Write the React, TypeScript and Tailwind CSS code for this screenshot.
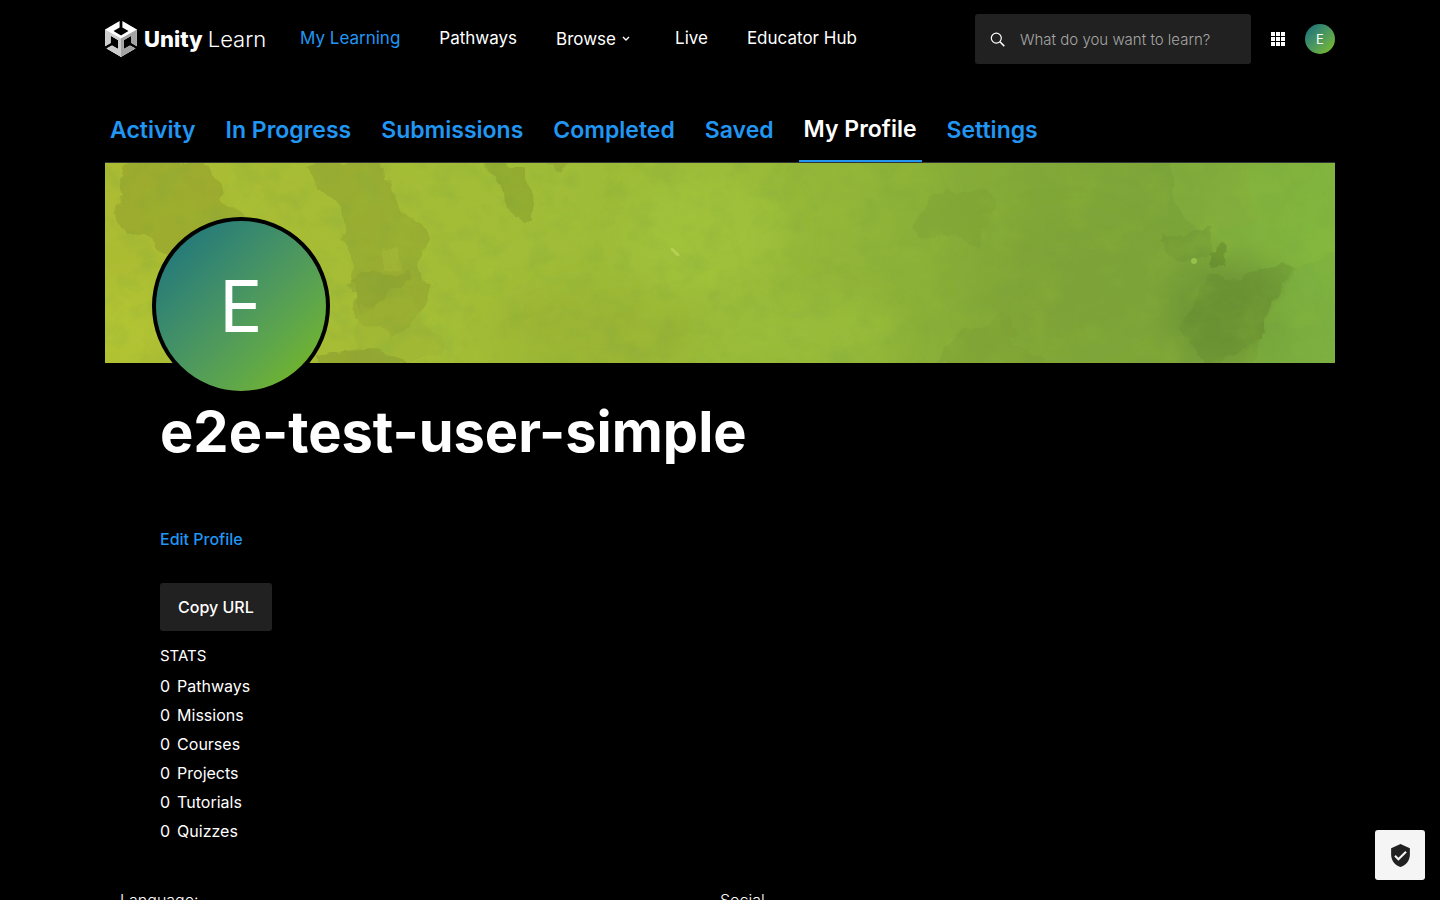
import React from "react";
import { MdVerifiedUser } from "react-icons/md";

const CUBE =
  "m12.9288 4.2939 3.7997 2.1929c.1366.077.1415.2905 0 .3675l-4.515 2.6076a.4192.4192 0 0 1-.4246 0L7.274 6.8543c-.139-.0745-.1415-.293 0-.3675l3.7972-2.193V0L1.3758 5.5977V16.793l3.7177-2.1456v-4.3858c-.0025-.1565.1813-.2682.318-.1838l4.5148 2.6076a.4252.4252 0 0 1 .2136.3676v5.2127c.0025.1565-.1813.2682-.3179.1838l-3.7996-2.1929-3.7178 2.1457L12 24l9.6954-5.5977-3.7178-2.1457-3.7996 2.1929c-.1341.082-.3229-.0248-.3179-.1838V13.053c0-.1565.087-.2956.2136-.3676l4.5149-2.6076c.134-.082.3228.0224.3179.1838v4.3858l3.7177 2.1456V5.5977L12.9288 0z";

function Logo() {
  return (
    <a href="#home" className="flex w-[161px] shrink-0 items-center gap-[7px]">
      <svg viewBox="1.37 0 21.26 24" className="h-9 w-8 shrink-0" aria-hidden="true">
        <clipPath id="cube">
          <path d={CUBE} />
        </clipPath>
        <g clipPath="url(#cube)">
          <path d="M0 0h24v24H0z" fill="#fff" />
          <path d="M1.37 5.6 12 11.73V24L1.37 18z" fill="#cccccc" />
          <path d="M22.63 5.6 12 11.73V24l10.63-6z" fill="#a3a3a3" />
        </g>
      </svg>
      <span className="flex items-baseline gap-[5px] text-[22px] leading-7">
        <span className="font-extrabold">Unity</span>
        <span className="font-light">Learn</span>
      </span>
    </a>
  );
}

function Banner() {
  return (
    <svg
      viewBox="0 0 1230 200"
      preserveAspectRatio="xMidYMid slice"
      className="block h-[200px] w-full"
      aria-hidden="true"
    >
      <defs>
        <linearGradient id="wash" x1="0" x2="1" y1="0" y2="0">
          <stop offset="0" stopColor="#adbc33" />
          <stop offset="0.3" stopColor="#a3bd37" />
          <stop offset="0.5" stopColor="#9bbb3a" />
          <stop offset="0.62" stopColor="#90b439" />
          <stop offset="0.75" stopColor="#82a838" />
          <stop offset="0.88" stopColor="#7ba43a" />
          <stop offset="1" stopColor="#80b440" />
        </linearGradient>
        <filter id="ragged" x="-10%" y="-10%" width="120%" height="120%">
          <feTurbulence type="fractalNoise" baseFrequency="0.03" numOctaves="4" seed="7" />
          <feDisplacementMap in="SourceGraphic" scale="26" xChannelSelector="R" yChannelSelector="G" />
          <feGaussianBlur stdDeviation="0.6" />
        </filter>
        <filter id="soft" x="-20%" y="-20%" width="140%" height="140%">
          <feGaussianBlur stdDeviation="16" />
        </filter>
        <filter id="shade" x="0" y="0" width="100%" height="100%">
          <feTurbulence type="fractalNoise" baseFrequency="0.04 0.045" numOctaves="5" seed="12" />
          <feColorMatrix values="0 0 0 0 0.2  0 0 0 0 0.38  0 0 0 0 0.05  2.4 0 0 0 -1.1" />
        </filter>
        <filter id="light" x="0" y="0" width="100%" height="100%">
          <feTurbulence type="fractalNoise" baseFrequency="0.025 0.03" numOctaves="4" seed="31" />
          <feColorMatrix values="0 0 0 0 0.4  0 0 0 0 0.64  0 0 0 0 0.04  2.4 0 0 0 -1.1" />
        </filter>
      </defs>
      <rect width="1230" height="200" fill="url(#wash)" />
      <g filter="url(#soft)">
        <ellipse cx="600" cy="70" rx="80" ry="60" fill="#a3c43c" opacity="0.6" />
        <ellipse cx="490" cy="170" rx="100" ry="45" fill="#97ae33" opacity="0.5" />
        <ellipse cx="700" cy="170" rx="90" ry="35" fill="#9abd3c" opacity="0.7" />
        <ellipse cx="960" cy="120" rx="90" ry="60" fill="#7b9f35" opacity="0.5" />
        <ellipse cx="1125" cy="150" rx="60" ry="50" fill="#688e32" opacity="0.7" />
        <ellipse cx="1180" cy="45" rx="80" ry="50" fill="#82b440" opacity="0.8" />
        <ellipse cx="1215" cy="100" rx="30" ry="60" fill="#82b83f" opacity="0.7" />
        <ellipse cx="20" cy="165" rx="45" ry="45" fill="#b4c532" opacity="0.8" />
      </g>
      <g filter="url(#ragged)">
        <path d="M25 0h80l20 40 35 28-60 30-35-8-35-22-20-20 5-35z" fill="#98a72e" opacity="0.75" />
        <path d="M200 0h80l10 30 20 30 12 20-10 30 10 25-30 45-45-30 8-40-5-25-22-45-20-20z" fill="#94a830" opacity="0.75" />
        <path d="M245 120l60-14-15 24-35 18z" fill="#8a9c2f" opacity="0.5" />
        <path d="M380 0h38l8 55-10 3-18-28z" fill="#8fa631" opacity="0.8" />
        <path d="M440 0h25l-10 14z" fill="#91a632" opacity="0.7" />
        <path d="M275 87l16 0 4 16-20 4z" fill="#a1b435" opacity="0.9" />
        <path d="M255 140l50-5 34 50-45 12-50 8z" fill="#9eb235" opacity="0.45" />
        <path d="M210 192l55-6 40 12-20 8h-70z" fill="#8f9f31" opacity="0.7" />
        <path d="M845 20l-22 18-12 28 60 20 20-50z" fill="#7c9e36" opacity="0.35" />
        <path d="M890 150l-40 25-20 27h110z" fill="#7c9e36" opacity="0.45" />
        <path d="M1065-10h70l20 60-40 22-25-5-20-30z" fill="#84ae3f" opacity="0.65" />
        <path d="M1060 70l50-5-5 25-35 4z" fill="#719836" opacity="0.6" />
        <path d="M1103 88l18-2-2 20-14 4z" fill="#668c31" opacity="0.8" />
        <path d="M1100 120l65-16 24 5-16 30-20 40-50 24-30-30z" fill="#648a32" opacity="0.4" />
        <path d="M1186 108l-22 40-22 58h93V90z" fill="#7bad40" opacity="0.6" />
      </g>
      <rect width="1230" height="200" filter="url(#shade)" opacity="0.25" />
      <rect width="1230" height="200" filter="url(#light)" opacity="0.14" />
      <path d="m567 86 6 6" stroke="#b7cf50" strokeWidth="3" strokeLinecap="round" />
      <circle cx="1089" cy="98" r="3" fill="#98bf4c" />
    </svg>
  );
}

const navLink = "pb-0.5 text-[17px] leading-6";

const tabs = ["Activity", "In Progress", "Submissions", "Completed", "Saved", "My Profile", "Settings"];
const stats = ["Pathways", "Missions", "Courses", "Projects", "Tutorials", "Quizzes"];

export default function App() {
  return (
    <div className="min-h-screen bg-black font-[Inter,sans-serif] text-base text-white">
      <div className="mx-auto w-full max-w-[1230px]">
        <header className="flex h-[78px] items-center">
          <Logo />
          <nav aria-label="Main" className="ml-[34px] flex items-center gap-[39px]">
            <a href="#learning" className={`${navLink} text-[#2196f3]`}>My Learning</a>
            <a href="#pathways" className={navLink}>Pathways</a>
            <button type="button" className="mr-1.5 flex items-center gap-1.5 text-[17px] leading-6">
              Browse
              <svg viewBox="0 0 8 6" className="h-1.5 w-2" fill="none" stroke="currentColor" strokeWidth="1.4" aria-hidden="true">
                <path d="m1 1 3 3 3-3" />
              </svg>
            </button>
            <a href="#live" className={navLink}>Live</a>
            <a href="#educators" className={navLink}>Educator Hub</a>
          </nav>
          <label className="ml-auto flex h-[50px] w-[276px] items-center gap-[15px] rounded-[3px] bg-[#212121] pl-[15px] pr-3">
            <svg viewBox="0 0 15 15" className="size-[15px] shrink-0" fill="none" stroke="#fff" strokeWidth="1.2" aria-hidden="true">
              <circle cx="6.3" cy="6.1" r="5" />
              <path d="m9.9 9.7 4.4 4.4" strokeWidth="1.5" />
            </svg>
            <input
              type="search"
              aria-label="Search"
              placeholder="What do you want to learn?"
              className="w-full min-w-0 bg-transparent pt-0.5 text-[15px] font-light leading-6 text-white outline-none placeholder:text-[#a6a6a6]"
            />
          </label>
          <button type="button" aria-label="Apps" className="ml-5 shrink-0">
            <svg viewBox="0 0 14 14" className="size-3.5" fill="#fff" aria-hidden="true">
              {[0, 5, 10].map((y) => [0, 5, 10].map((x) => <rect key={`${x}-${y}`} x={x} y={y} width="4" height="4" />))}
            </svg>
          </button>
          <button
            type="button"
            className="ml-5 flex size-[30px] shrink-0 items-center justify-center rounded-full bg-linear-to-br from-[#1d7578] from-10% to-[#76b822] to-90% pt-0.5 text-[13px]"
          >
            E
          </button>
        </header>

        <nav aria-label="Profile sections" className="mt-[18px] flex h-[67px] gap-5 border-b border-[#333]">
          {tabs.map((tab) => (
            <a
              key={tab}
              href={`#${tab}`}
              className={
                tab === "My Profile"
                  ? "flex items-center border-b-2 border-[#2196f3] px-[5px] pt-0.5 text-[23px] font-semibold"
                  : "flex items-center px-[5px] pt-0.5 text-[23px] font-semibold text-[#2196f3]"
              }
            >
              {tab}
            </a>
          ))}
        </nav>

        <main>
          <Banner />
          <div className="relative -mt-[146px] ml-[47px] flex size-[178px] items-center justify-center rounded-full border-4 border-black bg-linear-to-br from-[#21787a] from-10% to-[#72b524] to-90% text-[72px] leading-none">
            E
          </div>
          <div className="flex flex-col items-start pl-[55px]">
            <h1 className="mt-[5px] text-[56px] font-bold leading-16">e2e-test-user-simple</h1>
            <a href="#edit" className="mt-[63px] font-medium leading-6 text-[#2196f3]">Edit Profile</a>
            <button type="button" className="mt-8 h-12 rounded-[3px] bg-[#212121] px-[18px] font-medium">
              Copy URL
            </button>
            <h2 className="mt-[15px] text-[15px] leading-5">STATS</h2>
            <ul className="mt-[5px]">
              {stats.map((s) => (
                <li key={s} className="flex h-[29px] items-center gap-[7px]">
                  <span>0</span>
                  <span>{s}</span>
                </li>
              ))}
            </ul>
          </div>
          <div className="mt-[43px] grid grid-cols-2 font-light leading-6">
            <p className="pl-[15px]">Language:</p>
            <p>Social</p>
          </div>
        </main>
      </div>
      <button
        type="button"
        aria-label="Privacy settings"
        className="fixed bottom-5 right-[15px] flex size-[50px] items-center justify-center rounded-[3px] bg-[#f5f5f5] text-[#212121]"
      >
        <MdVerifiedUser size={25} />
      </button>
    </div>
  );
}
